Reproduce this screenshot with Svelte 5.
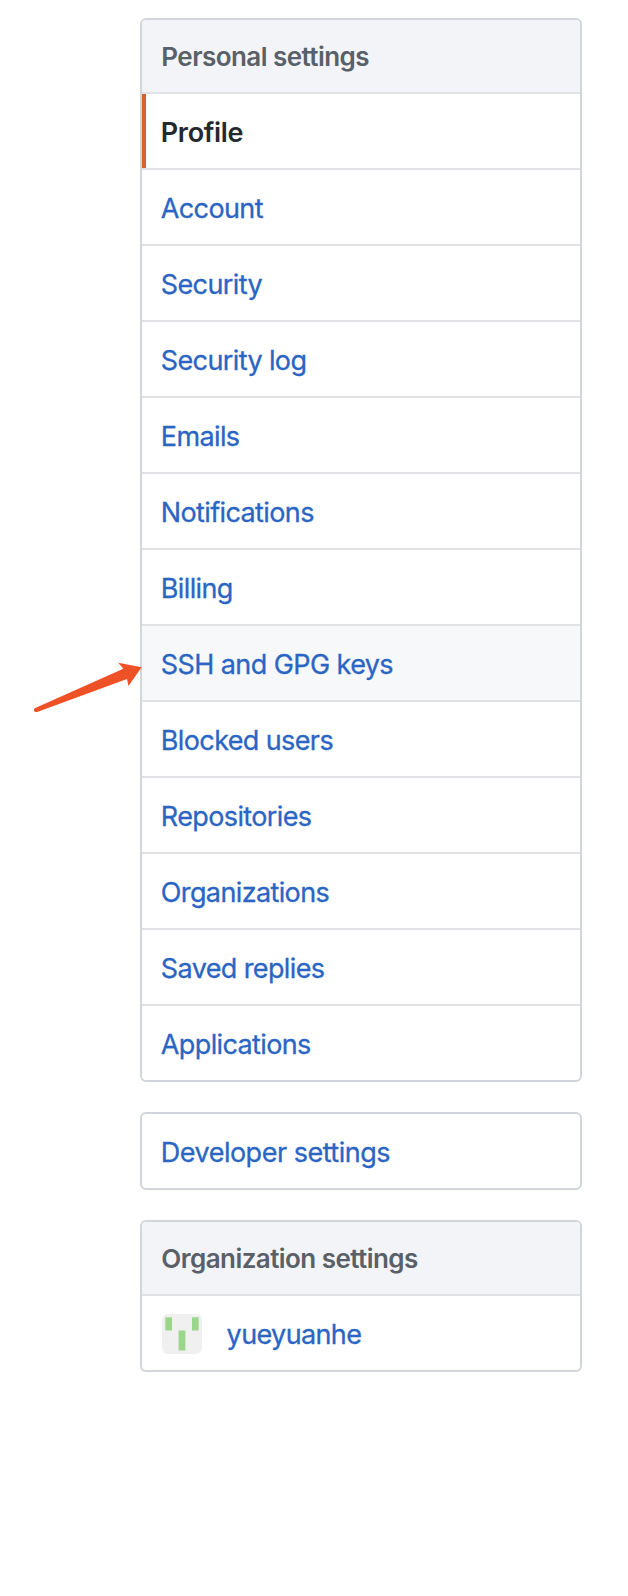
<script>
  const personal = [
    'Profile', 'Account', 'Security', 'Security log', 'Emails', 'Notifications', 'Billing',
    'SSH and GPG keys', 'Blocked users', 'Repositories', 'Organizations', 'Saved replies', 'Applications'
  ];
  const selected = 'Profile';
  const hovered = 'SSH and GPG keys';
</script>

<main>
  <nav class="menu">
    <h3>Personal settings</h3>
    {#each personal as item}
      <a href="#settings" class:selected={item === selected} class:hovered={item === hovered}>
        <span>{item}</span>
        {#if item === hovered}
          <svg class="arrow" width="112" height="56" viewBox="0 0 112 56" aria-hidden="true">
            <path d="M2.7 50.3 L91.3 10.7 L86.3 4.7 L109.6 9.3 L96.5 28 L95 21 L5.2 53.9 Q2.4 54.6 2 52.4 Q1.8 50.8 2.7 50.3 Z" fill="#ee5126" />
          </svg>
        {/if}
      </a>
    {/each}
  </nav>

  <nav class="menu">
    <a class="developer" href="#developer"><span>Developer settings</span></a>
  </nav>

  <nav class="menu">
    <h3>Organization settings</h3>
    <a href="#organization">
      <svg class="avatar" width="40" height="40" viewBox="0 0 40 40" aria-hidden="true">
        <rect width="40" height="40" rx="6" fill="#f0f0f0" />
        <path d="M3.3 3.3h6.7v13.3H3.3zM30 3.3h6.7v13.3H30zM16.6 16.6h6.8v20h-6.8z" fill="#9bd68b" />
      </svg>
      <span>yueyuanhe</span>
    </a>
  </nav>
</main>

<style>
  :global(body) {
    margin: 0;
    background: #fff;
  }
  main {
    display: flex;
    flex-direction: column;
    gap: 30px;
    box-sizing: border-box;
    min-height: 1596px;
    padding: 18px 46px 0 140px;
    font-family: Inter, "Liberation Sans", sans-serif;
  }
  .menu {
    display: flex;
    flex-direction: column;
    border: 2px solid #d2d5d9;
    border-radius: 6px;
  }
  h3 {
    box-sizing: border-box;
    height: 74px;
    margin: 0;
    padding: 0 19.3px;
    border-bottom: 2px solid #e0e2e5;
    border-radius: 4px 4px 0 0;
    background: #f3f4f8;
    color: #596067;
    font-size: 26px;
    font-weight: 600;
    line-height: 74px;
    letter-spacing: -0.55px;
    font-feature-settings: "calt" 0;
  }
  a {
    position: relative;
    display: flex;
    align-items: center;
    height: 74px;
    padding: 0 18.8px;
    border-bottom: 2px solid #e0e2e5;
    color: #2a65c3;
    font-size: 27px;
    font-weight: 400;
    line-height: 74px;
    letter-spacing: -0.62px;
    text-decoration: none;
    -webkit-text-stroke: 0.3px currentColor;
  }
  a span {
    padding-top: 3px;
    line-height: 71px;
  }
  a:last-child {
    border-bottom: 0;
  }
  .selected {
    color: #24292e;
    font-weight: 600;
    letter-spacing: -0.35px;
    -webkit-text-stroke: 0;
  }
  .selected::before {
    content: "";
    position: absolute;
    top: 0;
    bottom: 0;
    left: 0;
    width: 4px;
    background: #d3642f;
  }
  .hovered {
    background: #f6f8fa;
    letter-spacing: -0.58px;
  }
  .developer {
    letter-spacing: -0.5px;
    font-feature-settings: "calt" 0;
  }
  .arrow {
    position: absolute;
    left: -110px;
    top: 32px;
  }
  .avatar {
    margin: 2px 24.6px 0 1.2px;
  }
</style>
